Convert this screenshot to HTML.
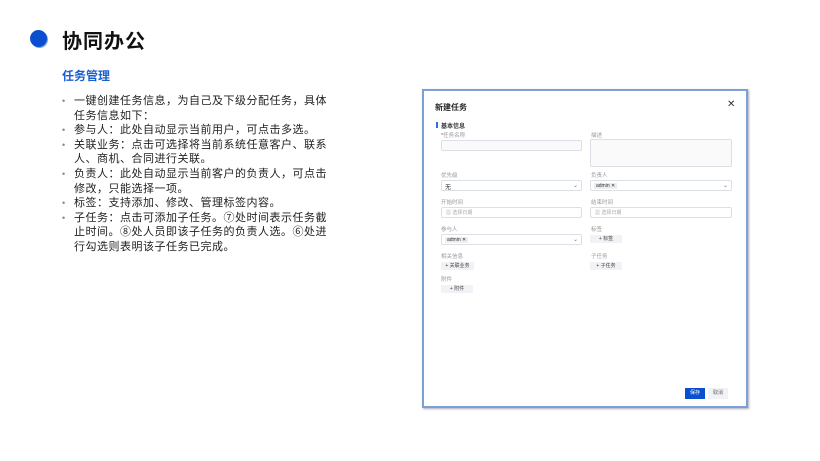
<!DOCTYPE html>
<html><head><meta charset="utf-8"><style>
*{margin:0;padding:0;box-sizing:border-box}
body{width:820px;height:461px;background:#fff;position:relative;overflow:hidden;font-family:"Liberation Sans","Noto Sans CJK SC",sans-serif}
.a{position:absolute}
.dot{left:30px;top:30px;width:17px;height:17px;border-radius:50%;background:#0b4fd0;box-shadow:1px 1px 0 #7aa0e6}
h1{position:absolute;left:62px;top:25px;font-size:20px;font-weight:bold;color:#111;letter-spacing:1px}
h2{position:absolute;left:62px;top:67px;font-size:12px;font-weight:bold;color:#1a5fd0}
ul{position:absolute;left:62px;top:94px;width:270px;list-style:none;font-size:11px;line-height:14.6px;color:#222;letter-spacing:0.5px}
li{position:relative;padding-left:12px}
li:before{content:"•";position:absolute;left:0;color:#888;font-size:9px}
.m{left:422px;top:89px;width:326px;height:319px;border:2px solid #7c9fd6;background:#fff;box-shadow:1px 1px 2px #aab}
.t{font-size:7px;color:#999}
.in{position:absolute;border:1px solid #dcdfe6;background:#fafafa;border-radius:2px}
.btn{position:absolute;background:#f0f2f5;font-size:5px;color:#444;text-align:center;line-height:8px;height:8px}
.chip{position:absolute;background:#eee;font-size:5px;padding:0 2px;line-height:6px;top:2px;left:3px;color:#333}
.car{position:absolute;right:3px;top:1px;font-size:6px;color:#777}
</style></head><body>
<div class="a dot"></div>
<h1>协同办公</h1>
<h2>任务管理</h2>
<ul>
<li>一键创建任务信息，为自己及下级分配任务，具体任务信息如下：</li>
<li>参与人：此处自动显示当前用户，可点击多选。</li>
<li>关联业务：点击可选择将当前系统任意客户、联系人、商机、合同进行关联。</li>
<li>负责人：此处自动显示当前客户的负责人，可点击修改，只能选择一项。</li>
<li>标签：支持添加、修改、管理标签内容。</li>
<li>子任务：点击可添加子任务。⑦处时间表示任务截止时间。⑧处人员即该子任务的负责人选。⑥处进行勾选则表明该子任务已完成。</li>
</ul>
<div class="a m">
<div class="a" style="left:11px;top:11px;font-size:8px;font-weight:bold;color:#222">新建任务</div>
<div class="a" style="left:303px;top:8px;font-size:10px;color:#333">✕</div>
<div class="a" style="left:12px;top:31px;width:2px;height:6px;background:#2f6fe0"></div>
<div class="a" style="left:17px;top:30px;font-size:6px;font-weight:bold;color:#333">基本信息</div>
<div class="a t" style="left:17px;top:40px;font-size:5.5px"><span style="color:#e33">*</span>任务名称</div>
<div class="in" style="left:17px;top:49px;width:141px;height:11px"></div>
<div class="a t" style="left:167px;top:40px;font-size:5.5px">描述</div>
<div class="in" style="left:166px;top:48px;width:142px;height:28px"></div>
<div class="a t" style="left:17px;top:80px;font-size:5.5px">优先级</div>
<div class="in" style="left:17px;top:89px;width:141px;height:11px;background:#fff"><span style="position:absolute;left:3px;top:1px;font-size:6px;color:#333">无</span><span class="car">⌄</span></div>
<div class="a t" style="left:167px;top:80px;font-size:5.5px">负责人</div>
<div class="in" style="left:166px;top:89px;width:142px;height:11px;background:#fff"><span class="chip">admin ✕</span><span class="car">⌄</span></div>
<div class="a t" style="left:17px;top:107px;font-size:5.5px">开始时间</div>
<div class="in" style="left:17px;top:116px;width:141px;height:11px;background:#fff"><span style="position:absolute;left:4px;top:1px;font-size:5px;color:#aaa">▦ 选择日期</span></div>
<div class="a t" style="left:167px;top:107px;font-size:5.5px">结束时间</div>
<div class="in" style="left:166px;top:116px;width:142px;height:11px;background:#fff"><span style="position:absolute;left:4px;top:1px;font-size:5px;color:#aaa">▦ 选择日期</span></div>
<div class="a t" style="left:17px;top:134px;font-size:5.5px">参与人</div>
<div class="in" style="left:17px;top:143px;width:141px;height:11px;background:#fff"><span class="chip">admin ✕</span><span class="car">⌄</span></div>
<div class="a t" style="left:167px;top:134px;font-size:5.5px">标签</div>
<div class="btn" style="left:166px;top:144px;width:32px">+ 标签</div>
<div class="a t" style="left:17px;top:161px;font-size:5.5px">相关信息</div>
<div class="btn" style="left:17px;top:171px;width:33px">+ 关联业务</div>
<div class="a t" style="left:167px;top:161px;font-size:5.5px">子任务</div>
<div class="btn" style="left:166px;top:171px;width:32px">+ 子任务</div>
<div class="a t" style="left:17px;top:184px;font-size:5.5px">附件</div>
<div class="btn" style="left:17px;top:194px;width:32px">+ 附件</div>
<div class="a" style="left:261px;top:297px;width:20px;height:11px;background:#0b4fd0;color:#fff;font-size:5px;text-align:center;line-height:11px">保存</div>
<div class="a" style="left:284px;top:297px;width:20px;height:11px;background:#f0f2f5;color:#666;font-size:5px;text-align:center;line-height:11px">取消</div>
</div>
</body></html>
